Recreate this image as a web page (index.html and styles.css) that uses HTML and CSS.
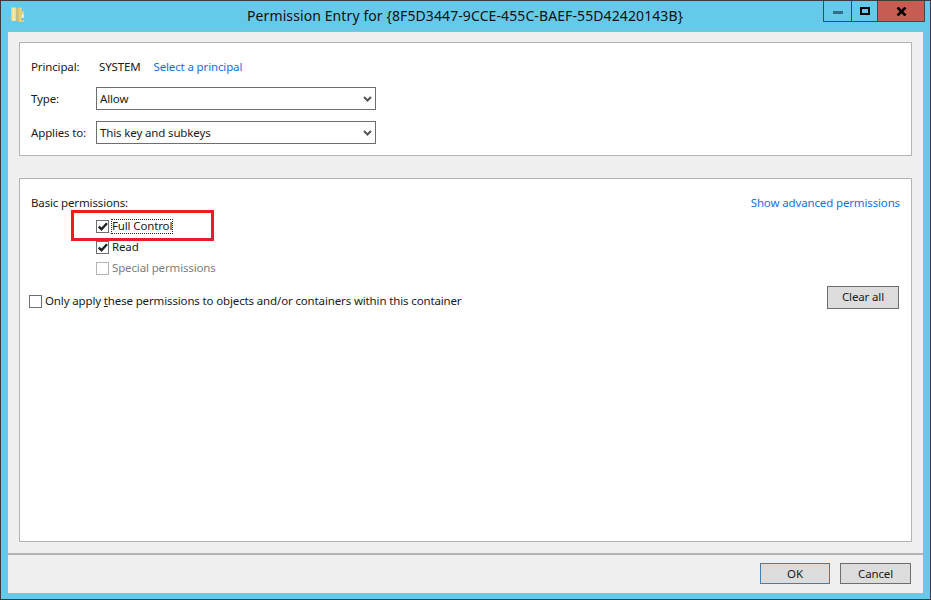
FILE: index.html
```html
<!DOCTYPE html>
<html lang="en">
<head>
<meta charset="utf-8">
<title>Permission Entry</title>
<link rel="stylesheet" href="styles.css">
</head>
<body>
<div class="window">
  <header class="titlebar">
    <svg class="folder" width="13" height="16" viewBox="0 0 13 16">
      <defs>
        <linearGradient id="leaf" x1="0" y1="0" x2="1" y2="0"><stop offset="0" stop-color="#e4cf78"/><stop offset="0.5" stop-color="#f6eeb4"/><stop offset="1" stop-color="#e6d384"/></linearGradient>
        <linearGradient id="mid" x1="0" y1="0" x2="1" y2="0"><stop offset="0" stop-color="#cfb456"/><stop offset="1" stop-color="#eedc8c"/></linearGradient>
      </defs>
      <path d="M0 0.5h5.5v13.5H1l-1-1z" fill="url(#leaf)"/>
      <path d="M5.5 0.5h5v15l-5-1.500z" fill="url(#mid)"/>
      <path d="M10.500 4h2.500v11h-2.500z" fill="#e2cd78"/>
      <path d="M11 7h1.500v4H11z" fill="#f6f6f2"/>
      <path d="M11 11h1.500v2H11z" fill="#58addd"/>
    </svg>
    <h1 class="title">Permission Entry for {8F5D3447-9CCE-455C-BAEF-55D42420143B}</h1>
    <div class="controls">
      <div class="ctl ctl-min"><span class="min-glyph"></span></div>
      <div class="ctl ctl-max"><span class="max-glyph"></span></div>
      <div class="ctl ctl-close">
        <svg width="11" height="9" viewBox="0 0 11 9"><path d="M1.500 0.500L9.500 8.500M9.500 0.500L1.500 8.500" stroke="#000" stroke-width="2.600" fill="none"/></svg>
      </div>
    </div>
  </header>
  <div class="client">
    <section class="panel panel-top">
      <div class="row row-principal">
        <span class="label">Principal:</span>
        <span class="value">SYSTEM</span>
        <a class="link">Select a principal</a>
      </div>
      <div class="row row-select">
        <span class="label">Type:</span>
        <div class="select"><span>Allow</span><svg width="9" height="6" viewBox="0 0 9 6"><path d="M1 1l3.500 3.500L8 1" stroke="#555" stroke-width="2" fill="none"/></svg></div>
      </div>
      <div class="row row-select">
        <span class="label">Applies to:</span>
        <div class="select"><span>This key and subkeys</span><svg width="9" height="6" viewBox="0 0 9 6"><path d="M1 1l3.500 3.500L8 1" stroke="#555" stroke-width="2" fill="none"/></svg></div>
      </div>
    </section>
    <section class="panel panel-main">
      <div class="main-head">
        <span>Basic permissions:</span>
        <a class="link">Show advanced permissions</a>
      </div>
      <div class="perms">
        <div class="check-row">
          <span class="box"><svg class="tick" width="10" height="9" viewBox="0 0 10 9"><path d="M0.800 4.500l2.700 2.700L9 1.200" stroke="#222" stroke-width="2.400" fill="none"/></svg></span>
          <span class="cap focus">Full Control</span>
          <span class="highlight"></span>
        </div>
        <div class="check-row">
          <span class="box"><svg class="tick" width="10" height="9" viewBox="0 0 10 9"><path d="M0.800 4.500l2.700 2.700L9 1.200" stroke="#222" stroke-width="2.400" fill="none"/></svg></span>
          <span class="cap">Read</span>
        </div>
        <div class="check-row disabled">
          <span class="box"></span>
          <span class="cap">Special permissions</span>
        </div>
      </div>
      <div class="only-row">
        <div class="check-row">
          <span class="box"></span>
          <span class="cap">Only apply <u>t</u>hese permissions to objects and/or containers within this container</span>
        </div>
        <button class="btn btn-clear" type="button">Clear all</button>
      </div>
    </section>
    <footer class="footer">
      <button class="btn btn-ok" type="button">OK</button>
      <button class="btn btn-cancel" type="button">Cancel</button>
    </footer>
  </div>
</div>
</body>
</html>
```
FILE: styles.css
```css
html, body {
  margin: 0;
  padding: 0;
  height: 100%;
}
body {
  font-family: "Noto Sans", "Open Sans", sans-serif;
  font-size: 11.5px;
  letter-spacing: -0.14px;
  color: #1a1a1a;
  background: #65c9ea;
  overflow: hidden;
}
.window {
  box-sizing: border-box;
  width: 931px;
  height: 600px;
  display: flex;
  flex-direction: column;
  background: #65c9ea;
  border: 1px solid #3c3c3c;
  padding: 0 7px 6px 7px;
}
.titlebar {
  height: 30px;
  flex: none;
  display: flex;
  align-items: flex-start;
  position: relative;
}
.folder {
  margin: 6px 0 0 3px;
}
.title {
  position: absolute;
  left: 239px;
  top: 6px;
  margin: 0;
  font-size: 14px;
  letter-spacing: 0.1px;
  font-weight: 400;
  line-height: 18px;
  color: #111;
  white-space: nowrap;
}
.controls {
  position: absolute;
  right: -2px;
  top: 0;
  height: 20px;
  display: flex;
  border: 1px solid #3c4a52;
  border-top: 0;
}
.ctl {
  display: flex;
  align-items: center;
  justify-content: center;
  height: 20px;
}
.ctl-min { width: 27px; border-right: 1px solid #3c4a52; }
.ctl-max { width: 25px; border-right: 1px solid #3c4a52; }
.ctl-close { width: 46px; background: #c75c50; }
.min-glyph {
  display: block;
  width: 10px;
  height: 3px;
  margin-top: 3px;
  background: #2f6f87;
}
.max-glyph {
  display: block;
  box-sizing: border-box;
  width: 10px;
  height: 8px;
  border: 2px solid #000;
}
.client {
  flex: 1;
  display: flex;
  flex-direction: column;
  background: #efefef;
  border-top: 1px solid #9db8c4;
  padding: 10px 11px 0;
  min-height: 0;
}
.panel {
  background: #fff;
  border: 1px solid #b4b4b4;
  box-sizing: border-box;
}
.panel-top {
  height: 114px;
  padding: 12px 0 0 11px;
  flex: none;
}
.panel-main {
  height: 364px;
  margin-top: 22px;
  padding: 15px 11px 0;
  flex: none;
  display: flex;
  flex-direction: column;
}
.row {
  display: flex;
  align-items: center;
}
.row-principal { height: 22px; }
.row-select { height: 23px; margin-top: 11px; }
.row-select:nth-child(2) { margin-top: 10px; }
.label { width: 65px; flex: none; }
.value { margin: 0 13px 0 3px; }
.link { color: #1a6edb; }
.select {
  box-sizing: border-box;
  width: 280px;
  height: 23px;
  border: 1px solid #6e6e6e;
  background: #fff;
  display: flex;
  align-items: center;
  justify-content: space-between;
  padding: 0 3px 0 3px;
}
.main-head {
  display: flex;
  justify-content: space-between;
  align-items: center;
  height: 17px;
}
.perms {
  margin: 9px 0 0 65px;
  display: flex;
  flex-direction: column;
  gap: 8px;
}
.check-row {
  display: flex;
  align-items: center;
  gap: 3px;
  height: 13px;
  position: relative;
}
.cap {
  height: 13px;
  line-height: 11px;
}
.box {
  box-sizing: border-box;
  width: 13px;
  height: 13px;
  flex: none;
  background: #fff;
  border: 1px solid #6e6e6e;
  display: flex;
  align-items: center;
  justify-content: center;
}
.tick { flex: none; }
.disabled { color: #7d7d7d; }
.disabled .box { border-color: #b4b4b4; }
.focus { outline: 1px dotted #222; outline-offset: 0; }
.highlight {
  position: absolute;
  left: -25px;
  top: -10px;
  width: 143px;
  height: 31px;
  box-sizing: border-box;
  border: 3px solid #ec1c24;
}
.only-row {
  margin: 11px 1px 0 -2px;
  display: flex;
  justify-content: space-between;
  align-items: flex-start;
}
.only-row .check-row { margin-top: 9px; }
.btn {
  box-sizing: border-box;
  font: inherit;
  letter-spacing: inherit;
  color: inherit;
  background: #dcdcdc;
  border: 1px solid #6e6e6e;
  padding: 0;
  height: 23px;
}
.btn-clear { width: 72px; padding-bottom: 2px; }
.footer {
  flex: none;
  margin: 11px -11px 0;
  border-top: 2px solid #b4b4b4;
  display: flex;
  justify-content: flex-end;
  gap: 10px;
  padding: 8px 12px 0;
}
.footer .btn { height: 21px; }
.btn-ok { width: 70px; border-color: #3f7fb5; }
.btn-cancel { width: 71px; }
```
